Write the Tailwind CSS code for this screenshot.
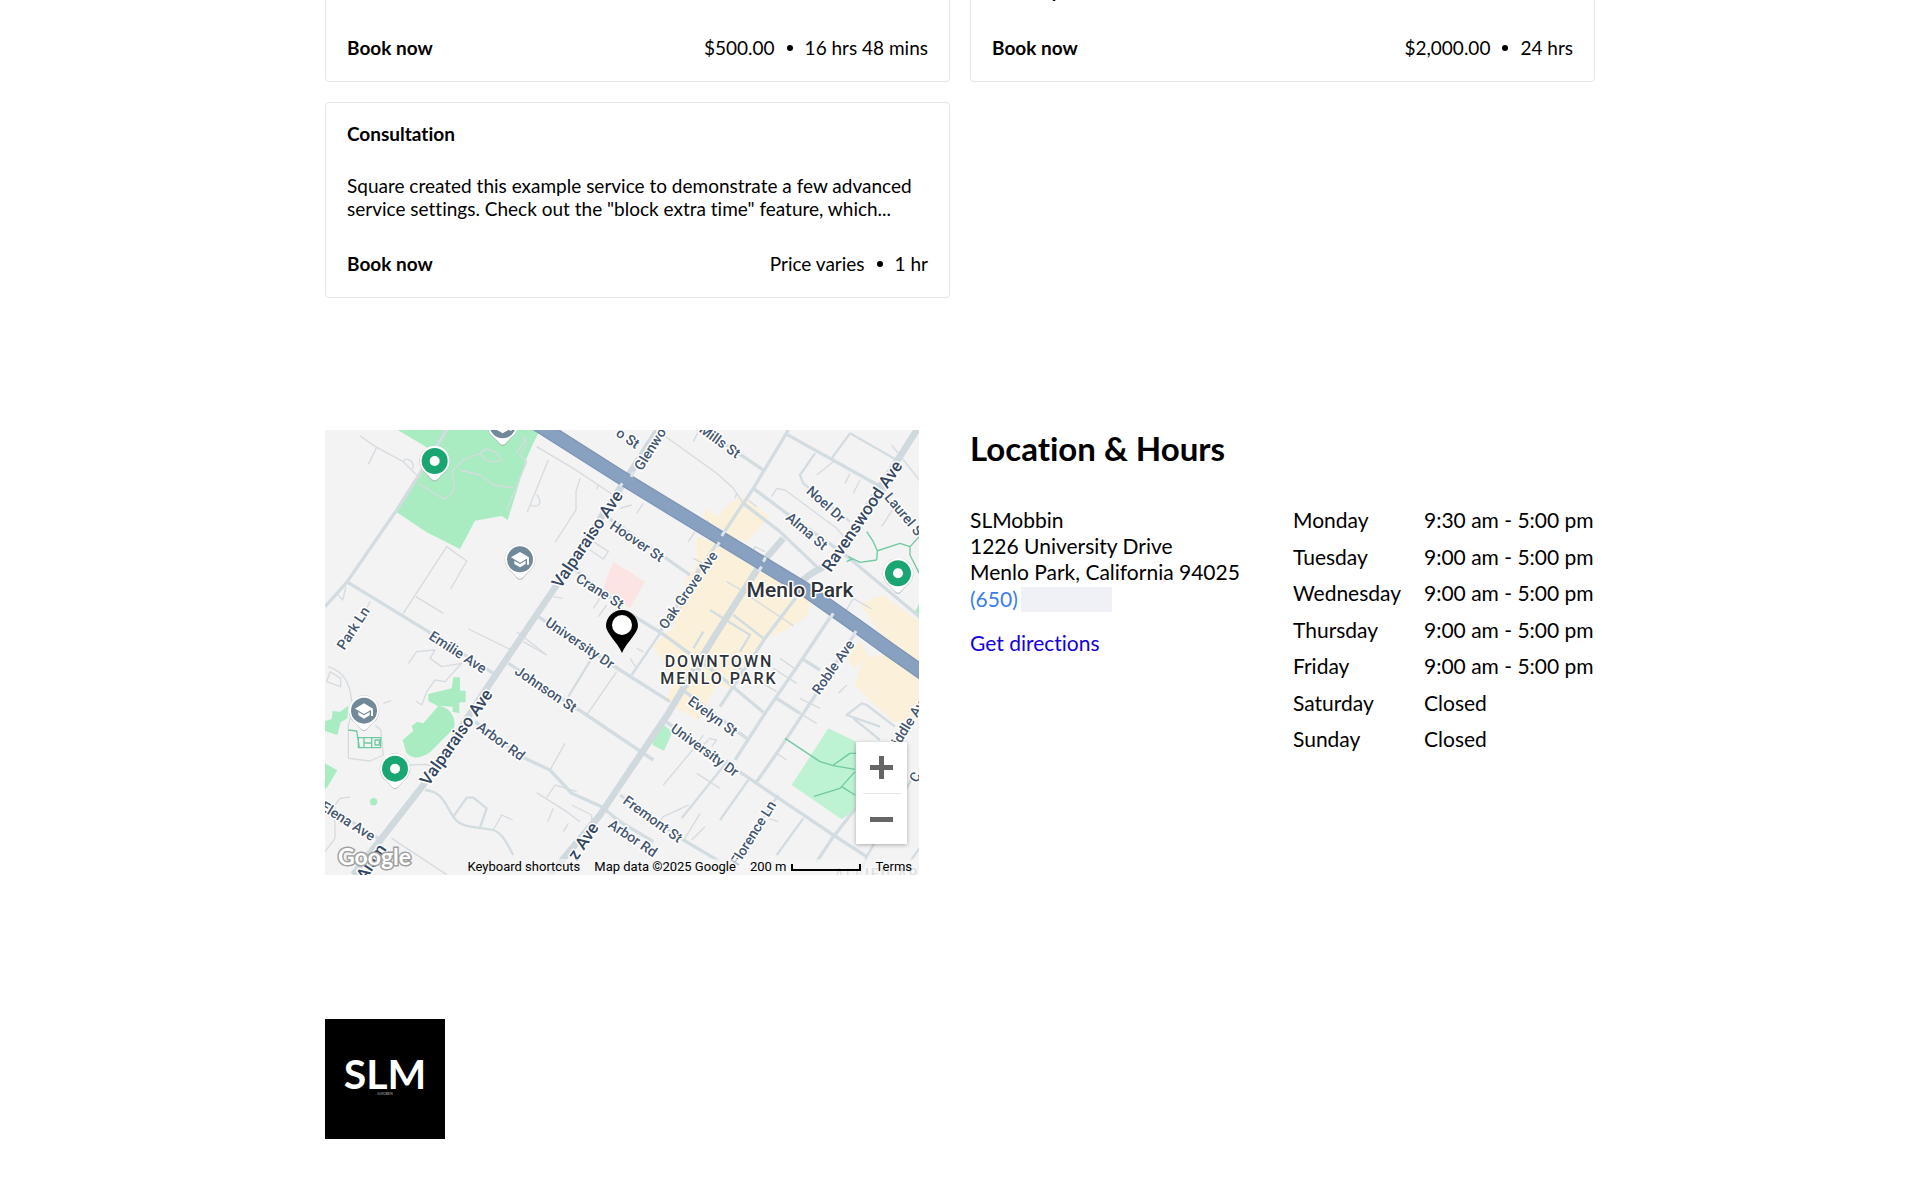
<!DOCTYPE html>
<html lang="en">
<head>
<meta charset="utf-8">
<meta name="viewport" content="width=device-width, initial-scale=1">
<title>SLMobbin – Book an appointment</title>
<script src="https://cdn.jsdelivr.net/npm/@tailwindcss/browser@4"></script>
</head>
<body class="overflow-x-hidden bg-white font-['Lato',sans-serif] text-black [font-variant-ligatures:none]">
<main class="mx-auto w-full max-w-[1270px] overflow-hidden">

  <!-- Services -->
  <section class="-mt-[41px] grid grid-cols-2 gap-5 text-[19px] leading-[23px]" aria-label="Services">
    <article class="flex flex-col justify-end rounded-[4px] border border-[#e4e4e4] px-[21px] pt-[19px] pb-[22px]">
      <div class="flex items-center justify-between">
        <button type="button" class="font-bold">Book now</button>
        <p class="flex items-center gap-3"><span>$500.00</span><i class="size-1.5 rounded-full bg-black"></i><span>16 hrs 48 mins</span></p>
      </div>
    </article>
    <article class="flex flex-col gap-[34px] rounded-[4px] border border-[#e4e4e4] px-[21px] pt-[19px] pb-[22px]">
      <h3 class="font-bold">Full Day</h3>
      <div class="flex items-center justify-between">
        <button type="button" class="font-bold">Book now</button>
        <p class="flex items-center gap-3"><span>$2,000.00</span><i class="size-1.5 rounded-full bg-black"></i><span>24 hrs</span></p>
      </div>
    </article>
    <article class="rounded-[4px] border border-[#e4e4e4] px-[21px] pt-[19px] pb-[22px]">
      <h3 class="font-bold">Consultation</h3>
      <p class="mt-[29px]">Square created this example service to demonstrate a few advanced service settings. Check out the "block extra time" feature, which...</p>
      <div class="mt-8 flex items-center justify-between">
        <button type="button" class="font-bold">Book now</button>
        <p class="flex items-center gap-3"><span>Price varies</span><i class="size-1.5 rounded-full bg-black"></i><span>1 hr</span></p>
      </div>
    </article>
  </section>

  <!-- Location and hours -->
  <section class="mt-[132px] grid grid-cols-[594fr_625fr] gap-[51px]">
    <div class="relative h-[445px] overflow-hidden bg-[#f4f3f4] font-['Roboto',sans-serif]">
      <svg class="block h-full w-full" viewBox="0 0 594 445" preserveAspectRatio="xMidYMid slice" role="img" aria-label="Map of downtown Menlo Park">
        <defs>
          <g id="pin-base">
            <path d="M0 62C-8 62-14 50-26 38A46 46 0 1 1 26 38C14 50 8 62 0 62Z" fill="#9aa3a8" opacity=".6"/>
            <path d="M0 58C-8 58-14 48-26 36A45 45 0 1 1 26 36C14 48 8 58 0 58Z" fill="#fff"/>
          </g>
          <g id="park-pin"><use href="#pin-base"/><circle r="39" fill="#1aa673"/><circle r="15" fill="#fff"/></g>
          <g id="school-pin"><use href="#pin-base"/><circle r="39" fill="#72899a"/>
            <path d="M-27-6L0-22L27-6V16H21V-2L0 10Z" fill="#fff"/><path d="M-17 4L0 14L17 4V14L0 24L-17 14Z" fill="#fff"/>
          </g>
        </defs>
        <g transform="translate(-5 -5) scale(.333333)" fill="none" stroke-linejoin="round">
          <!-- land use -->
          <g fill="#a9ecc1">
            <path d="M225 10H662L640 55L620 100L580 230L563 285L545 273L465 287L420 372L320 322L228 260L300 145L320 67Z"/>
            <path d="M325 807L395 790L400 757H420V797H437V832H418V865L398 860V845L352 842L325 828Z"/>
            <path d="M275 903L292 890L310 895L355 843C390 845 410 880 402 910L330 982C300 1005 270 1000 258 980L248 945L280 918Z"/>
            <path d="M15 888L35 882L38 858L60 860L85 842L82 880L62 892L52 930L15 918Z"/>
            <path d="M15 1015L52 1036L20 1090H15Z"/><circle cx="161" cy="1130" r="11"/>
            <path d="M1025 895L1058 920L1032 978L998 960V935Z" fill="#b4efcb"/>
            <path d="M1525 910L1640 965V1130L1565 1183L1415 1080Z" fill="#bdf2d2"/>
            <path d="M1785 560L1800 530V590Z"/>
          </g>
          <g fill="#fbf0da">
            <path d="M1230 235L1270 215L1350 275L1300 330L1275 350L1220 330L1195 310L1145 290L1160 250L1190 275Z"/>
            <path d="M1130 335L1200 360L1320 435L1440 470L1470 520L1465 570L1400 615L1335 640L1260 740L1230 790L1190 780L1135 885L1080 855L1040 820L1060 770L1000 660L1060 610L1100 460L1130 420Z"/>
            <path d="M1620 535L1690 510L1798 590V730L1710 670Z"/>
            <path d="M1580 690L1620 650L1650 700L1600 730Z"/>
            <path d="M1640 700L1700 685L1798 760V885L1720 890L1605 780L1620 730Z"/>
          </g>
          <path d="M880 410L975 470L930 550L850 490Z" fill="#fce4e2"/>

          <!-- lanes and driveways -->
          <g stroke="#d5dbdf" stroke-width="4">
            <path d="M120 33L170 67L250 110L290 150M170 67L145 118M250 110C255 95 285 105 278 132M650 65L760 130L880 210M685 105L622 260M650 208C670 235 655 250 630 240M780 160L768 200V255L705 352M835 180L830 192"/>
            <path d="M250 565L380 365L440 408L392 492M288 515L370 565M50 505L68 525L78 485M150 530L130 570M445 612L575 675M700 515L728 520M820 350L865 380L850 402L810 375M820 550L850 505M835 575L860 540M610 650L680 690"/>
            <path d="M295 175L370 222C420 205 400 160 395 140L430 105L480 85M420 135L480 150L520 180L580 188M480 85C500 60 530 80 545 105C510 120 490 100 480 85M610 30L620 60L600 90L620 110L560 255M590 85L620 40"/>
            <path d="M25 725C70 740 90 770 95 830M30 740L62 760V785L20 770ZM190 835L213 827M100 850L85 900V1000L150 1008L190 990L182 915L165 900M265 715L290 680L345 675L330 700L365 725L425 715L375 770L345 765L320 800L305 840L288 828M375 770L420 720M270 1020L320 1018L350 1030"/>
            <path d="M60 1120L45 1140V1240L15 1280M60 1120L90 1116M215 1240L380 1349M520 1215L545 1170L578 1185M690 1035L735 955M800 870L890 740M650 1103L740 1160L780 1190M680 1118L705 1080L770 1100M700 1150L683 1190M745 1195L730 1220M755 1140L815 1170V1190M590 620L680 690"/>
            <path d="M1030 30L1190 145L1240 190L1270 235M1120 50L1135 20M1250 205L1245 220M1355 215L1370 190L1395 195L1550 310L1580 345M1490 150L1540 110M1590 145L1575 175M1620 165L1600 205M1685 305L1720 250M1715 60L1798 165M1285 225L1310 245M1290 400L1305 365L1335 380M1570 570L1600 520L1655 552M1190 345L1205 315M1125 320L1105 350M1160 295L1165 285M970 235L950 265M900 250L935 240M1070 575L1140 415M1120 400L1150 415M1290 515L1420 602M1220 470L1290 510"/>
            <path d="M1130 960L1030 1080M1130 1045L1200 1090M1065 1160L1105 1140L1030 1175L1010 1200M1140 1165L1095 1240M1155 1205L1115 1245M1150 930L1130 960M1165 945L1150 960M1175 965L1190 945L1165 940M1345 1180L1375 1190M1370 985L1400 1005M1380 700L1430 735M1360 730L1430 775M1310 765L1370 800M1500 850L1440 820M1580 780L1555 805M1440 865L1490 895M930 700L950 730M970 680L950 670"/>
          </g>
          <g stroke="#d2dce1" stroke-width="7">
            <path d="M315 1095C370 1100 375 1140 400 1175C420 1210 470 1205 520 1215C550 1225 565 1265 580 1290M400 1175L440 1118L460 1118L500 1150L480 1208"/>
            <path d="M1225 1005L1085 1180M1285 1065L1200 1185M1450 1180L1370 1290M1375 1110L1240 1315M1785 1045L1640 1295L1620 1349M1798 1270L1770 1310M1680 905L1580 870L1625 835L1640 840L1725 905M1600 880L1680 945"/>
            <path d="M1485 85L1440 150L1450 175L1590 290M1590 25L1535 100M1590 25L1730 105M935 750L1020 625M745 815L815 700M1230 700L1270 740M1240 570L1330 640M1170 555L1290 630L1260 680M1120 670L1150 620"/>
          </g>
          <!-- streets -->
          <g stroke="#d2dce1" stroke-width="10">
            <path d="M15 545L80 472L230 255L300 145L380 15M80 470L325 620L520 745M565 715L800 870L1000 1005"/>
            <path d="M465 890L615 1000L690 1035L755 1105L845 1145L900 1190L1000 1250M15 1140L190 1250M655 575L900 735L1050 830"/>
            <path d="M1160 20L1330 135M1405 15L1300 190L1210 325L1020 620M1395 25L1700 195M1300 190L1400 265L1570 385L1798 575M1270 235L1380 320L1490 425M860 275L1110 450M920 560L1030 628L1190 745L1330 862"/>
            <path d="M1535 570L1445 705L1335 865L1245 1005M1445 495L1335 640L1200 845M1605 625L1490 805L1370 985L1310 1070M1030 885L1310 1075L1540 1230L1640 1295M1095 800L1280 940M900 1110L1090 1245L1200 1310M1740 980L1540 1235L1490 1310M1445 700L1500 735M1370 820L1440 865M1160 700L1100 785M760 430L905 545"/>
          </g>
          <g stroke="#cfd9de" stroke-width="20">
            <path d="M100 1349L310 1080L500 790L710 480L900 190L1030 -10M690 1349L840 1170L900 1080L1045 865L1180 640L1320 420L1390 340"/>
            <path d="M1440 475C1480 430 1520 430 1550 400L1600 310L1730 110L1800 0"/>
          </g>
          <!-- rail corridor -->
          <path d="M640 -10L900 155L1200 338L1450 490L1620 610L1710 675L1810 745" stroke="#7b94b6" stroke-width="44"/>
          <path d="M640 -10L900 155L1200 338L1450 490L1620 610L1710 675L1810 745" stroke="#89a1c0" stroke-width="37"/>
          <path d="M933 155L942 140M1205 333L1215 318M1190 365L1198 352M1315 440L1325 425M1330 410L1337 397M1530 580L1540 565M1600 632L1608 618M900 185L907 175" stroke="#dce4ec" stroke-width="9"/>
          <!-- park trails -->
          <g stroke="#6fcaa0" stroke-width="4">
            <path d="M1585 395L1620 412L1670 405M1640 320L1660 350L1672 378L1670 405M1670 378L1740 355L1770 365L1798 335M1770 365V390L1798 445M1580 410L1600 400"/>
            <path d="M1395 940L1500 1010L1540 1022L1605 1033M1540 1020L1590 985L1610 985M1482 1114L1560 1090L1605 1040M1565 1085L1605 1110"/>
            <path d="M85 915L110 918L118 968M115 940V968H182V938H115M132 940V968M155 940V968M132 954H155M165 945H178V960H165Z"/>
          </g>
          <use href="#park-pin" x="344" y="108"/><use href="#park-pin" x="1734" y="445"/><use href="#park-pin" x="225" y="1031"/>
          <use href="#school-pin" x="600" y="403"/><use href="#school-pin" x="132" y="857"/><use href="#school-pin" x="548" y="1"/>
        </g>

        <!-- street names -->
        <g class="font-medium" font-size="14" fill="#45566f" stroke="#fff" stroke-width="3" stroke-linejoin="round" paint-order="stroke" text-anchor="middle" dominant-baseline="central">
          <text transform="translate(28 198) rotate(-57)">Park Ln</text>
          <text transform="translate(133 222) rotate(33)">Emilie Ave</text>
          <text transform="translate(275 161) rotate(32)">Crane St</text>
          <text transform="translate(312 111) rotate(34)">Hoover St</text>
          <text transform="translate(255 213) rotate(34)">University Dr</text>
          <text transform="translate(221 259) rotate(34)">Johnson St</text>
          <text transform="translate(176 311) rotate(36)">Arbor Rd</text>
          <text transform="translate(23 391) rotate(32)">Elena Ave</text>
          <text transform="translate(363 160) rotate(-55)">Oak Grove Ave</text>
          <text transform="translate(325 19) rotate(-58)">Glenwo</text>
          <text transform="translate(303 8) rotate(34)">o St</text>
          <text transform="translate(395 11) rotate(36)">Mills St</text>
          <text transform="translate(501 74) rotate(42)">Noel Dr</text>
          <text transform="translate(482 101) rotate(40)">Alma St</text>
          <text transform="translate(579 84) rotate(50)">Laurel S</text>
          <text transform="translate(388 286) rotate(36)">Evelyn St</text>
          <text transform="translate(380 320) rotate(36)">University Dr</text>
          <text transform="translate(328 389) rotate(36)">Fremont St</text>
          <text transform="translate(308 408) rotate(34)">Arbor Rd</text>
          <text transform="translate(428 403) rotate(-58)">Florence Ln</text>
          <text transform="translate(508 237) rotate(-55)">Roble Ave</text>
          <text transform="translate(583 293) rotate(-58)">iddle Av</text>
          <text transform="translate(590 347) rotate(-58)">C</text>
        </g>
        <g class="font-medium" font-size="17" fill="#35465f" stroke="#fff" stroke-width="3" stroke-linejoin="round" paint-order="stroke" text-anchor="middle" dominant-baseline="central">
          <text transform="translate(262 109) rotate(-56)">Valparaiso Ave</text>
          <text transform="translate(131 307) rotate(-55)">Valparaiso Ave</text>
          <text transform="translate(537 86) rotate(-56)">Ravenswood Ave</text>
          <text transform="translate(258 411) rotate(-56)">z Ave</text>
          <text transform="translate(46 432) rotate(-56)">Alam</text>
        </g>
        <g class="font-medium" fill="#2f3338" stroke="#fff" stroke-width="3" stroke-linejoin="round" paint-order="stroke" text-anchor="middle">
          <text x="475" y="167" font-size="21">Menlo Park</text>
          <text class="tracking-[2px]" x="394" y="237" font-size="16">DOWNTOWN</text>
          <text class="tracking-[2px]" x="394" y="254" font-size="16">MENLO PARK</text>
          <text class="tracking-[2px]" x="552" y="449" font-size="14" fill="#a5aaaf">ALLIED AR</text>
        </g>
        <!-- business marker -->
        <path fill-rule="evenodd" d="M297 223C293 213 281 203 281 196A16 16 0 1 1 313 196C313 203 301 213 297 223Z" fill="#000"/>
        <circle cx="297" cy="195" r="10" fill="#fff"/>
        <text x="13" y="435" font-size="23" class="font-['Lato',sans-serif] font-bold" fill="#fff" stroke="#a0a0a0" stroke-width="3" paint-order="stroke">Google</text>
      </svg>

      <div class="absolute right-3 bottom-[31px] flex w-[51px] flex-col items-center bg-white shadow-[0_1px_4px_rgba(0,0,0,0.3)]">
        <button type="button" aria-label="Zoom in" class="grid h-[51px] w-full place-items-center"><svg class="size-[23px]" viewBox="0 0 23 23" fill="#666"><path d="M9 0h5v9h9v5h-9v9H9v-9H0V9h9z"/></svg></button>
        <span class="h-px w-[38px] bg-[#e6e6e6]"></span>
        <button type="button" aria-label="Zoom out" class="grid h-[50px] w-full place-items-center"><svg class="size-[23px]" viewBox="0 0 23 23" fill="#666"><path d="M0 9h23v5H0z"/></svg></button>
      </div>

      <div class="absolute right-0 bottom-0 flex h-4 items-center gap-3.5 bg-[#f5f5f5]/70 pr-[7px] text-[13px] leading-4">
        <button type="button">Keyboard shortcuts</button>
        <span>Map data ©2025 Google</span>
        <span class="flex items-center gap-[5px]">200 m<i class="h-[7px] w-[70px] border-2 border-t-0 border-black"></i></span>
        <a href="#terms">Terms</a>
      </div>
    </div>

    <div>
      <h2 class="text-[33px] leading-9 font-bold">Location &amp; Hours</h2>
      <div class="mt-[41px] flex justify-between text-[21px] leading-[26px]">
        <address class="not-italic">
          <p>SLMobbin</p>
          <p>1226 University Drive</p>
          <p>Menlo Park, California 94025</p>
          <p class="flex h-7 items-center gap-[3px]"><a href="tel:650" class="text-[#3b7de9]">(650)</a><span class="h-[25px] w-[91px] bg-[#f0f1f7]"></span></p>
          <a href="#directions" class="mt-[17px] block text-[#1400e0]">Get directions</a>
        </address>
        <table class="h-64 text-left">
          <tbody class="align-top">
            <tr><th scope="row" class="w-[131px] p-0 font-normal">Monday</th><td class="w-[171px] p-0">9:30 am - 5:00 pm</td></tr>
            <tr><th scope="row" class="p-0 font-normal">Tuesday</th><td class="p-0">9:00 am - 5:00 pm</td></tr>
            <tr><th scope="row" class="p-0 font-normal">Wednesday</th><td class="p-0">9:00 am - 5:00 pm</td></tr>
            <tr><th scope="row" class="p-0 font-normal">Thursday</th><td class="p-0">9:00 am - 5:00 pm</td></tr>
            <tr><th scope="row" class="p-0 font-normal">Friday</th><td class="p-0">9:00 am - 5:00 pm</td></tr>
            <tr><th scope="row" class="p-0 font-normal">Saturday</th><td class="p-0">Closed</td></tr>
            <tr><th scope="row" class="p-0 font-normal">Sunday</th><td class="p-0">Closed</td></tr>
          </tbody>
        </table>
      </div>
    </div>
  </section>

  <!-- Footer logo -->
  <footer class="mt-36 pb-[61px]">
    <a href="#home" aria-label="SLMobbin home" class="block size-[120px] bg-black">
      <svg class="size-full" viewBox="0 0 120 120" fill="#fff" text-anchor="middle">
        <text x="60" y="70" font-size="41" class="font-bold">SLM</text>
        <text x="60" y="76" font-size="3" fill="#bbb">SLMOBBIN</text>
      </svg>
    </a>
  </footer>
</main>
</body>
</html>
